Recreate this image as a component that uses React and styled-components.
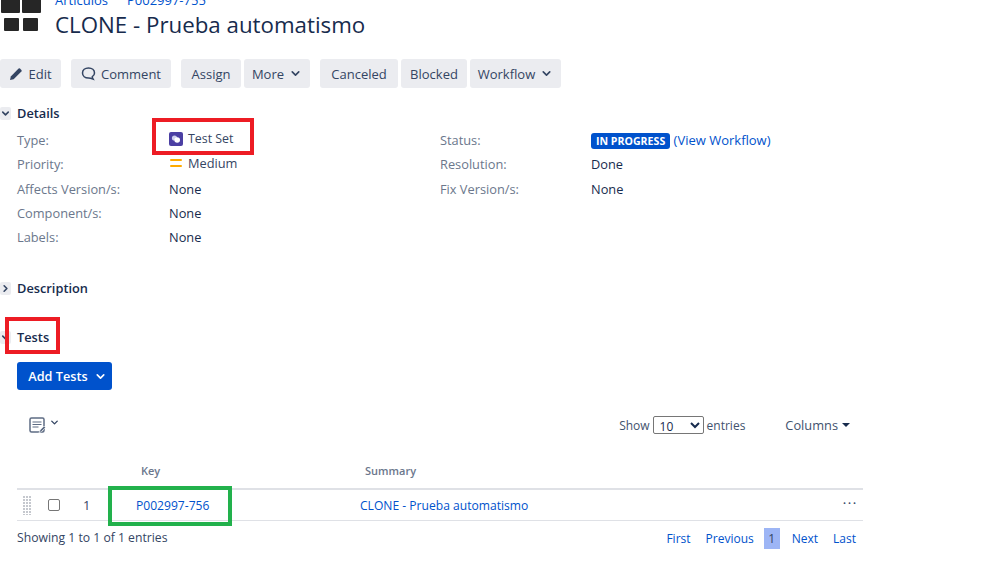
import styled, { createGlobalStyle } from 'styled-components';
import { ChevronDown, ChevronRight } from 'lucide-react';

const GlobalStyle = createGlobalStyle`
  html, body {
    margin: 0;
    background: #fff;
  }
  body {
    font-family: 'Open Sans', 'Noto Sans', sans-serif;
    font-size: 12.8px;
    color: #172b4d;
  }
`;

const details = [
  ['Type:', 'type'],
  ['Priority:', 'priority'],
  ['Affects Version/s:', 'None'],
  ['Component/s:', 'None'],
  ['Labels:', 'None'],
];

const statusDetails = [
  ['Status:', 'status'],
  ['Resolution:', 'Done'],
  ['Fix Version/s:', 'None'],
];

const renderValue = (value) => {
  if (value === 'type') {
    return (
      <IconValue>
        <TestSetIcon />
        <TypeName>Test Set</TypeName>
        <RedBox $top={-12} $left={-17} $width={102} $height={37} />
      </IconValue>
    );
  }
  if (value === 'priority') {
    return (
      <IconValue>
        <MediumIcon />
        Medium
      </IconValue>
    );
  }
  if (value === 'status') {
    return (
      <>
        <Lozenge>IN PROGRESS</Lozenge> <InlineLink>(View Workflow)</InlineLink>
      </>
    );
  }
  return value;
};

const TestSetIcon = () => (
  <svg width="14" height="14" viewBox="0 0 14 14">
    <rect width="14" height="14" rx="2" fill="#4b3fa3" />
    <circle cx="5.5" cy="6" r="2.6" fill="#cfd0ee" />
    <circle cx="8.2" cy="8" r="2.8" fill="#fff" />
  </svg>
);

const MediumIcon = () => (
  <svg width="14" height="14" viewBox="0 0 14 14">
    <rect x="1" y="3" width="12" height="2" rx="1" fill="#ffab00" />
    <rect x="1" y="9" width="12" height="2" rx="1" fill="#ffab00" />
  </svg>
);

// top row of the logo runs off the top of the page, as in the scrolled view
const ProjectLogo = () => (
  <svg width="42" height="42" viewBox="0 0 42 42">
    <rect x="1" y="0" width="19" height="23" rx="1" fill="#262626" />
    <rect x="22" y="0" width="19" height="23" rx="1" fill="#262626" />
    <rect x="4" y="28" width="15" height="13" rx="1" fill="#262626" />
    <rect x="23" y="28" width="15" height="13" rx="1" fill="#262626" />
  </svg>
);

const PencilIcon = () => (
  <svg width="14" height="14" viewBox="0 0 14 14">
    <path d="M1 13l.8-3.6L9.6 1.6a1 1 0 0 1 1.4 0l1.4 1.4a1 1 0 0 1 0 1.4L4.6 12.2z" fill="#344563" />
  </svg>
);

const CommentIcon = () => (
  <svg width="15" height="15" viewBox="0 0 15 15">
    <path
      d="M7.5 2C4 2 1.5 4 1.5 7s2.5 5 6 5c1 0 2 .1 4.5 1-.6-1-.8-1.7-.7-2.3C12.7 9.8 13.5 8.5 13.5 7c0-3-2.5-5-6-5z"
      fill="none"
      stroke="#344563"
      strokeWidth="1.5"
    />
  </svg>
);

const ReportIcon = () => (
  <svg width="17" height="17" viewBox="0 0 17 17">
    <rect x="1" y="1" width="14" height="14" rx="1.5" fill="none" stroke="#5e6c84" strokeWidth="1.5" />
    <path d="M3.5 5h9M3.5 7.5h9M3.5 10h6" stroke="#5e6c84" strokeWidth="1.2" />
    <path d="M10 16l1-3 4-4 1.500 1.500-4 4z" fill="#5e6c84" stroke="#fff" strokeWidth=".6" />
  </svg>
);

const App = () => (
  <Page>
    <GlobalStyle />
    <Header>
      <LogoSlot>
        <ProjectLogo />
      </LogoSlot>
      <div>
        <Breadcrumbs>
          <span>Artículos</span>
          <span>P002997-755</span>
        </Breadcrumbs>
        <Title>CLONE - Prueba automatismo</Title>
      </div>
    </Header>

    <Toolbar>
      <ButtonGroup>
        <ToolButton $width={61}>
          <PencilIcon />
          Edit
        </ToolButton>
      </ButtonGroup>
      <ButtonGroup>
        <ToolButton $width={100}>
          <CommentIcon />
          Comment
        </ToolButton>
      </ButtonGroup>
      <ButtonGroup>
        <ToolButton $width={60}>Assign</ToolButton>
        <ToolButton $width={66}>
          More
          <ChevronDown size={13} strokeWidth={3} />
        </ToolButton>
      </ButtonGroup>
      <ButtonGroup>
        <ToolButton $width={78}>Canceled</ToolButton>
        <ToolButton $width={66}>Blocked</ToolButton>
        <ToolButton $width={91}>
          Workflow
          <ChevronDown size={13} strokeWidth={3} />
        </ToolButton>
      </ButtonGroup>
    </Toolbar>

    <SectionHead $top={15}>
      <Toggle>
        <ChevronDown size={11} strokeWidth={3.5} />
      </Toggle>
      Details
    </SectionHead>

    <DetailsGrid>
      <DetailColumn>
        {details.map(([label, value]) => (
          <DetailRow key={label} $labelWidth={152}>
            <DetailLabel>{label}</DetailLabel>
            <DetailValue>{renderValue(value)}</DetailValue>
          </DetailRow>
        ))}
      </DetailColumn>
      <DetailColumn>
        {statusDetails.map(([label, value]) => (
          <DetailRow key={label} $labelWidth={151}>
            <DetailLabel>{label}</DetailLabel>
            <DetailValue>{renderValue(value)}</DetailValue>
          </DetailRow>
        ))}
      </DetailColumn>
    </DetailsGrid>

    <SectionHead $top={28.8}>
      <Toggle>
        <ChevronRight size={11} strokeWidth={3.5} />
      </Toggle>
      Description
    </SectionHead>

    <SectionHead $top={29}>
      <Toggle>
        <ChevronDown size={11} strokeWidth={3.5} />
      </Toggle>
      Tests
      <RedBox $top={-10} $left={5} $width={55} $height={37} />
    </SectionHead>

    <AddButton>
      Add Tests
      <ChevronDown size={13} strokeWidth={3} />
    </AddButton>

    <TableTools>
      <ReportMenu>
        <ReportIcon />
        <ChevronDown size={11} strokeWidth={3} />
      </ReportMenu>
      <LengthControl>
        Show
        <LengthSelect defaultValue="10">
          <option>10</option>
        </LengthSelect>
        entries
      </LengthControl>
      <ColumnsMenu>
        Columns
        <Caret />
      </ColumnsMenu>
    </TableTools>

    <TableHead>
      <span />
      <span />
      <span />
      <HeadCell>Key</HeadCell>
      <HeadCell>Summary</HeadCell>
      <span />
    </TableHead>

    <TableRow>
      <DragHandle />
      <RowCheck />
      <RowNumber>1</RowNumber>
      <KeyCell>
        <TableLink>P002997-756</TableLink>
        <GreenBox />
      </KeyCell>
      <TableLink>CLONE - Prueba automatismo</TableLink>
      <RowMenu>•••</RowMenu>
    </TableRow>

    <TableFoot>
      <EntryCount>Showing 1 to 1 of 1 entries</EntryCount>
      <Pager>
        <PageLink>First</PageLink>
        <PageLink>Previous</PageLink>
        <CurrentPage>1</CurrentPage>
        <PageLink>Next</PageLink>
        <PageLink>Last</PageLink>
      </Pager>
    </TableFoot>
  </Page>
);

export default App;

const Page = styled.div`
  width: 999px;
  height: 568px;
  overflow: hidden;
`;

const Header = styled.header`
  display: flex;
  height: 59px;
  margin-top: -10px;
`;

const LogoSlot = styled.div`
  width: 55px;
  flex: none;
`;

const Breadcrumbs = styled.div`
  display: flex;
  gap: 19px;
  height: 20px;
  line-height: 20px;
  font-size: 13px;
  color: #0052cc;
`;

const Title = styled.h1`
  margin: 0;
  font-size: 22.3px;
  line-height: 30px;
  font-weight: 400;
  color: #172b4d;
`;

const Toolbar = styled.div`
  display: flex;
  gap: 10px;
  margin-top: 10px;
`;

const ButtonGroup = styled.div`
  display: flex;
  gap: 3px;
`;

const ToolButton = styled.div`
  width: ${(props) => props.$width}px;
  height: 29px;
  display: flex;
  align-items: center;
  justify-content: center;
  gap: 5px;
  background: #ebecf0;
  border-radius: 3px;
  color: #344563;
  font-size: 13px;
`;

const SectionHead = styled.h2`
  position: relative;
  display: flex;
  align-items: center;
  height: 20px;
  margin: ${(props) => props.$top}px 0 0;
  font-size: 12.8px;
  font-weight: 600;
  color: #172b4d;
`;

const Toggle = styled.span`
  width: 11px;
  height: 13px;
  margin-right: 6px;
  display: flex;
  align-items: center;
  justify-content: center;
  background: #ebecf0;
  border-radius: 2px;
  color: #344563;
`;

const DetailsGrid = styled.div`
  display: grid;
  grid-template-columns: 423px 1fr;
  padding-left: 17px;
  margin-top: 4.7px;
`;

const DetailColumn = styled.div`
  display: flex;
  flex-direction: column;
`;

const DetailRow = styled.div`
  display: grid;
  grid-template-columns: ${(props) => props.$labelWidth}px 1fr;
  height: 24.4px;
  align-items: center;
`;

const DetailLabel = styled.span`
  color: #6b778c;
`;

const DetailValue = styled.span`
  color: #172b4d;
`;

const IconValue = styled.span`
  position: relative;
  display: inline-flex;
  align-items: center;
  gap: 5px;
  color: #344563;
`;

const TypeName = styled.span`
  font-size: 12.4px;
`;

const RedBox = styled.span`
  position: absolute;
  top: ${(props) => props.$top}px;
  left: ${(props) => props.$left}px;
  width: ${(props) => props.$width}px;
  height: ${(props) => props.$height}px;
  box-sizing: border-box;
  border: 4px solid #ed1c24;
  pointer-events: none;
`;

const Lozenge = styled.span`
  display: inline-block;
  padding: 0 5px;
  background: #0052cc;
  border-radius: 3px;
  color: #fff;
  font-size: 10.6px;
  font-weight: 700;
  line-height: 16px;
`;

const InlineLink = styled.span`
  font-size: 13px;
  color: #0052cc;
`;

const AddButton = styled.div`
  display: flex;
  align-items: center;
  justify-content: center;
  gap: 6px;
  width: 95px;
  height: 28px;
  box-sizing: border-box;
  padding-left: 6px;
  margin: 15px 0 0 17px;
  background: #0052cc;
  border-radius: 3px;
  color: #fff;
  font-size: 12.7px;
  font-weight: 600;
`;

const TableTools = styled.div`
  display: flex;
  align-items: center;
  height: 26px;
  margin-top: 22px;
  padding-left: 29px;
  color: #42526e;
`;

const ReportMenu = styled.div`
  display: flex;
  align-items: flex-start;
  gap: 3px;
  color: #344563;
`;

const LengthControl = styled.div`
  display: flex;
  align-items: center;
  gap: 3px;
  margin-left: auto;
  font-size: 12px;
`;

const LengthSelect = styled.select`
  width: 51px;
  height: 18px;
  padding: 0 0 0 2px;
  font: inherit;
  color: #172b4d;
  background: #fff;
  border: 1px solid #767676;
  border-radius: 2px;
`;

const ColumnsMenu = styled.div`
  display: flex;
  align-items: center;
  gap: 4px;
  margin: 0 149px 0 40px;
`;

const Caret = styled.span`
  border-top: 4px solid #172b4d;
  border-left: 4px solid transparent;
  border-right: 4px solid transparent;
`;

const columns = '27px 33px 59px 224px 1fr 34px';

const TableHead = styled.div`
  display: grid;
  grid-template-columns: ${columns};
  width: 846px;
  height: 28px;
  margin: 24px 0 0 17px;
  box-sizing: border-box;
  border-bottom: 2px solid #dfe1e6;
`;

const HeadCell = styled.span`
  padding-left: 5px;
  font-size: 11px;
  font-weight: 600;
  line-height: 18px;
  color: #6b778c;
`;

const TableRow = styled.div`
  display: grid;
  grid-template-columns: ${columns};
  align-items: center;
  width: 846px;
  height: 31px;
  margin-left: 17px;
  box-sizing: border-box;
  border-bottom: 1px solid #dfe1e6;
  color: #344563;
`;

const DragHandle = styled.span`
  width: 8px;
  height: 20px;
  margin-left: 6px;
  background-image: linear-gradient(#fff 1px, transparent 1px),
    linear-gradient(90deg, #c5c8ce 2px, transparent 2px);
  background-size: 3px 3px;
`;

const RowCheck = styled.span`
  width: 10px;
  height: 10px;
  margin-left: 4px;
  border: 1px solid #767676;
  border-radius: 2px;
`;

const RowNumber = styled.span`
  padding-left: 6px;
`;

const KeyCell = styled.span`
  position: relative;
  display: block;
  line-height: 17px;
`;

const GreenBox = styled.span`
  position: absolute;
  top: -11px;
  left: -28px;
  width: 124px;
  height: 40px;
  box-sizing: border-box;
  border: 4px solid #22b14c;
  pointer-events: none;
`;

const TableLink = styled.span`
  font-size: 12.1px;
  color: #0052cc;
`;

const RowMenu = styled.span`
  justify-self: end;
  padding-right: 5px;
  margin-top: -6px;
  font-size: 8px;
  letter-spacing: 2px;
  color: #42526e;
`;

const TableFoot = styled.div`
  display: flex;
  justify-content: space-between;
  align-items: center;
  width: 846px;
  height: 32px;
  margin-left: 17px;
`;

const EntryCount = styled.span`
  font-size: 12.2px;
  color: #344563;
`;

const Pager = styled.div`
  display: flex;
  align-items: center;
  gap: 15px;
  padding-right: 7px;
  padding-top: 2px;
`;

const PageLink = styled.span`
  font-size: 12px;
  color: #0052cc;
`;

const CurrentPage = styled.span`
  width: 16px;
  height: 21px;
  margin: 0 -3px 0 -5px;
  line-height: 21px;
  text-align: center;
  font-size: 12px;
  color: #344563;
  background: #9db5f5;
`;
